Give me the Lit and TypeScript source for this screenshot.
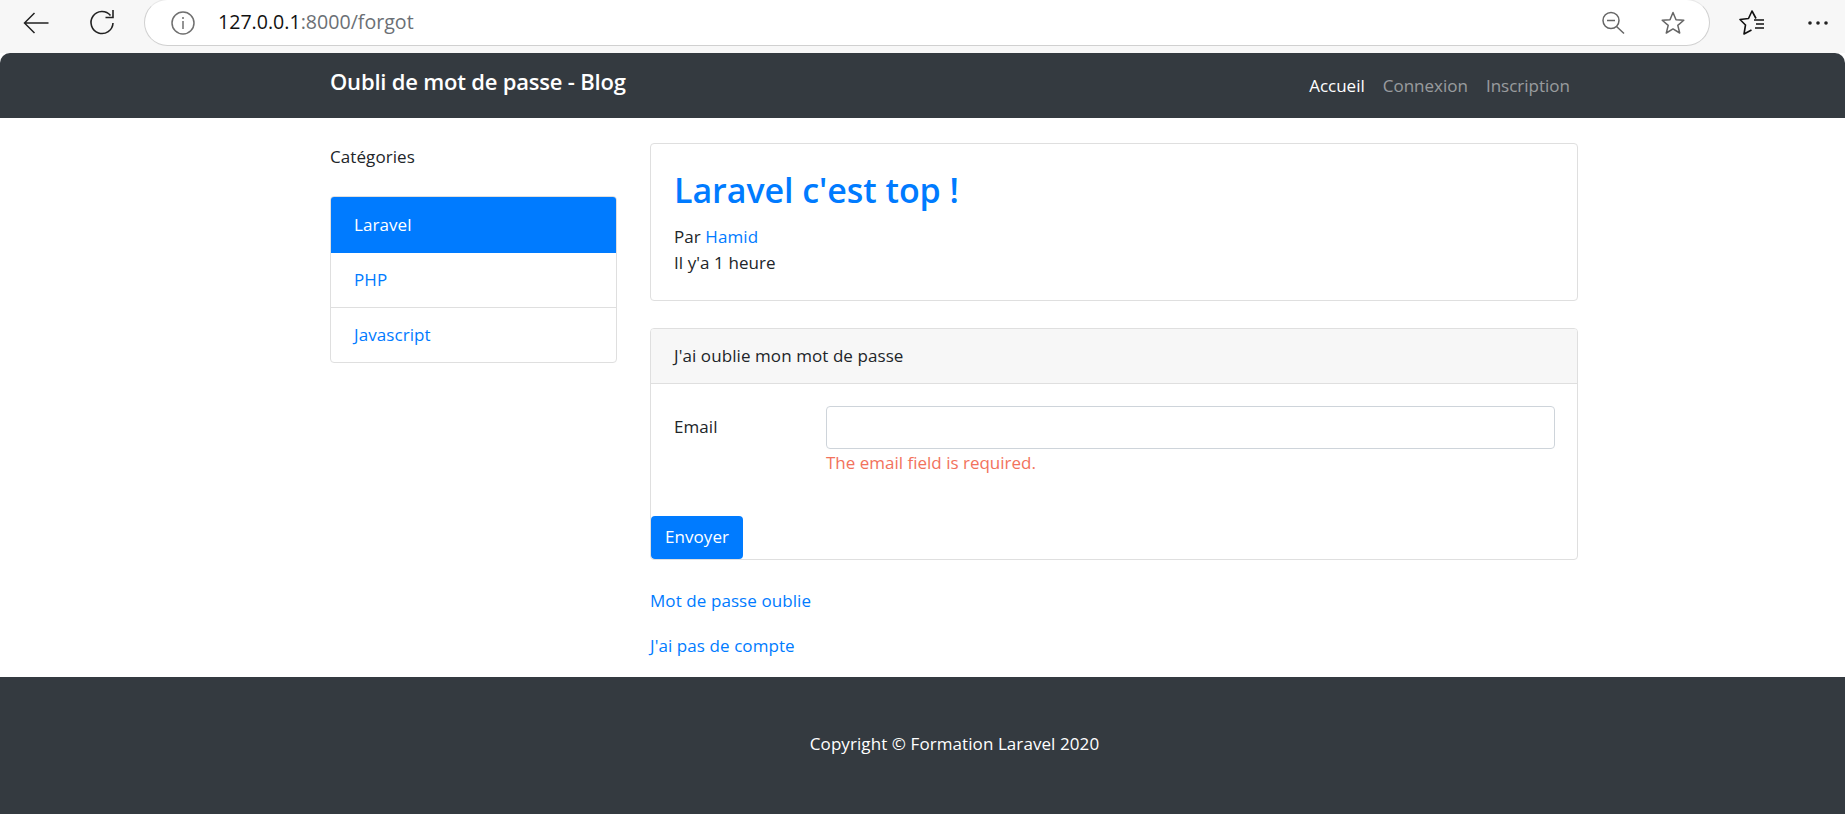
import { LitElement, html, css } from "lit";
import { customElement } from "lit/decorators.js";

@customElement("app-root")
export class AppRoot extends LitElement {
  static styles = css`
    :host { display: block; height: 814px; overflow: hidden; background: #fff; color: #212529;
      font-family: "Open Sans", "Noto Sans", sans-serif; font-size: 17px; line-height: 26.4px; letter-spacing: 0.08px; }
    a { color: #007bff; text-decoration: none; }
    .chrome { height: 53px; background: #f7f7f7; display: flex; align-items: flex-start; padding-left: 22px; }
    .tool { flex: none; display: flex; align-items: center; justify-content: center; height: 46px; }
    .reload { margin-left: 38px; }
    .addr { flex: none; width: 1566px; height: 47px; box-sizing: border-box; margin: -1px 0 0 28px; background: #fff; border: 1px solid #d0d0d0; border-top-color: #e8e8e8; border-radius: 24px; display: flex; align-items: center; padding: 0 23px 0 26px; }
    .url { margin-left: 23px; font-size: 19.6px; color: #6b7075; letter-spacing: 0; flex: 1; }
    .url b { font-weight: 400; color: #111; }
    .zoomi { margin-right: 35px; }
    .fav { margin-left: 28px; }
    .dots { margin-left: 40px; }
    .navbar { height: 65px; background: #343a40; border-radius: 10px 10px 0 0; box-sizing: border-box; padding: 0 275px 0 330px; display: flex; justify-content: space-between; }
    .brand { color: #fff; font-size: 22px; font-weight: 600; letter-spacing: -0.2px; margin-top: 13px; line-height: 30px; }
    .nav { display: flex; gap: 18px; margin-top: 20px; letter-spacing: 0; }
    .nav a { color: rgba(255,255,255,.5); }
    .nav a.on { color: #fff; }
    .content { display: flex; padding: 25px 267px 0 330px; gap: 33px; height: 559px; box-sizing: border-box; }
    .side { width: 287px; flex: none; }
    .side h2 { font: inherit; margin: 0; padding-top: 1px; height: 53px; box-sizing: border-box; }
    .group { border: 1px solid #dfdfdf; border-radius: 4px; overflow: hidden; }
    .group a { display: block; height: 54px; line-height: 54px; padding-left: 23px; }
    .group a.on { background: #007bff; color: #fff; height: 57px; line-height: 57px; margin: -1px -1px 0; padding-left: 24px; }
    .group a + a { border-top: 1px solid #dfdfdf; }
    .group a.on + a { border-top: 0; }
    .main { flex: 1; min-width: 0; }
    .card { border: 1px solid #dfdfdf; border-radius: 4px; overflow: hidden; }
    .post { height: 158px; box-sizing: border-box; padding: 25px 23px 0; margin-bottom: 27px; }
    .post h1 { margin: 0 0 13px; font-size: 34px; line-height: 42px; font-weight: 600; color: #007bff; letter-spacing: -0.05px; }
    .head { height: 55px; background: #f7f7f7; border-bottom: 1px solid #dfdfdf; box-sizing: border-box; padding-left: 23px; line-height: 54px; }
    .form { height: 175px; box-sizing: border-box; display: flex; flex-direction: column; justify-content: space-between; }
    .row { display: flex; padding: 22px 22px 0 23px; }
    .row label { width: 152px; line-height: 42px; }
    .field { flex: 1; }
    .input { height: 43px; box-sizing: border-box; border: 1px solid #ced4da; border-radius: 4px; }
    .err { color: #f2725c; margin-top: 1px; letter-spacing: 0; }
    .btn { align-self: flex-start; background: #007bff; color: #fff; border: 0; border-radius: 4px; width: 92px; height: 43px; font: inherit; letter-spacing: inherit; padding: 0; }
    .links { display: flex; flex-direction: column; gap: 18.600px; margin-top: 28px; }
    .footer { height: 137px; background: #343a40; color: #fff; text-align: center; line-height: 134px; padding-left: 64px; box-sizing: border-box; }
  `;

  render() {
    return html`
      <div class="chrome">
        <div class="tool"><svg width="28" height="24" viewBox="0 0 28 24" fill="none" stroke="#222" stroke-width="1.5"><path d="M2.500 12H26.500M12.500 2 2.500 12l10 10"/></svg></div>
        <div class="tool reload"><svg width="28" height="28" viewBox="0 0 28 28" fill="none" stroke="#222" stroke-width="1.6"><path d="M22.500 6.500A11 11 0 1 0 25 14"/><path d="M25 1V8.500H17.500"/></svg></div>
        <div class="addr">
          <svg width="24" height="24" viewBox="0 0 24 24" fill="none" stroke="#707070" stroke-width="1.500"><circle cx="12" cy="12" r="11"/><path d="M12 10v8M12 6v2"/></svg>
          <div class="url"><b>127.0.0.1</b>:8000/forgot</div>
          <svg class="zoomi" width="26" height="26" viewBox="0 0 26 26" fill="none" stroke="#666" stroke-width="1.500"><circle cx="12" cy="10.500" r="8"/><path d="M17.500 16.500l7.500 7M8 10.500h8"/></svg>
          <svg width="26" height="26" viewBox="0 0 26 26" fill="none" stroke="#666" stroke-width="1.500" stroke-linejoin="round"><path d="M13 2.500l3 7.200 7.800.6-6 5.100 1.900 7.600-6.700-4.100-6.700 4.100 1.900-7.600-6-5.100 7.800-.6z"/></svg>
        </div>
        <div class="tool fav"><svg width="28" height="28" viewBox="0 0 28 28" fill="none" stroke="#111" stroke-width="1.600" stroke-linejoin="round"><path d="M18 9.500 14 2 10.500 9.500 2 10.500l5.500 5.500L6 25l7.500-4"/><path d="M16 11H26M18 15H26M17 19H26"/></svg></div>
        <div class="tool dots"><svg width="24" height="4" viewBox="0 0 24 4" fill="#222"><circle cx="4" cy="2" r="1.800"/><circle cx="12" cy="2" r="1.800"/><circle cx="20" cy="2" r="1.800"/></svg></div>
      </div>
      <header class="navbar">
        <div class="brand">Oubli de mot de passe - Blog</div>
        <nav class="nav"><a class="on" href="#">Accueil</a><a href="#">Connexion</a><a href="#">Inscription</a></nav>
      </header>
      <div class="content">
        <aside class="side">
          <h2>Catégories</h2>
          <div class="group"><a class="on" href="#">Laravel</a><a href="#">PHP</a><a href="#">Javascript</a></div>
        </aside>
        <main class="main">
          <div class="card post">
            <h1>Laravel c'est top !</h1>
            <div>Par <a href="#">Hamid</a></div>
            <div>Il y'a 1 heure</div>
          </div>
          <div class="card">
            <div class="head">J'ai oublie mon mot de passe</div>
            <div class="form">
              <div class="row">
                <label>Email</label>
                <div class="field"><div class="input"></div><div class="err">The email field is required.</div></div>
              </div>
              <button class="btn">Envoyer</button>
            </div>
          </div>
          <div class="links"><a href="#">Mot de passe oublie</a><a href="#">J'ai pas de compte</a></div>
        </main>
      </div>
      <footer class="footer">Copyright © Formation Laravel 2020</footer>
    `;
  }
}
